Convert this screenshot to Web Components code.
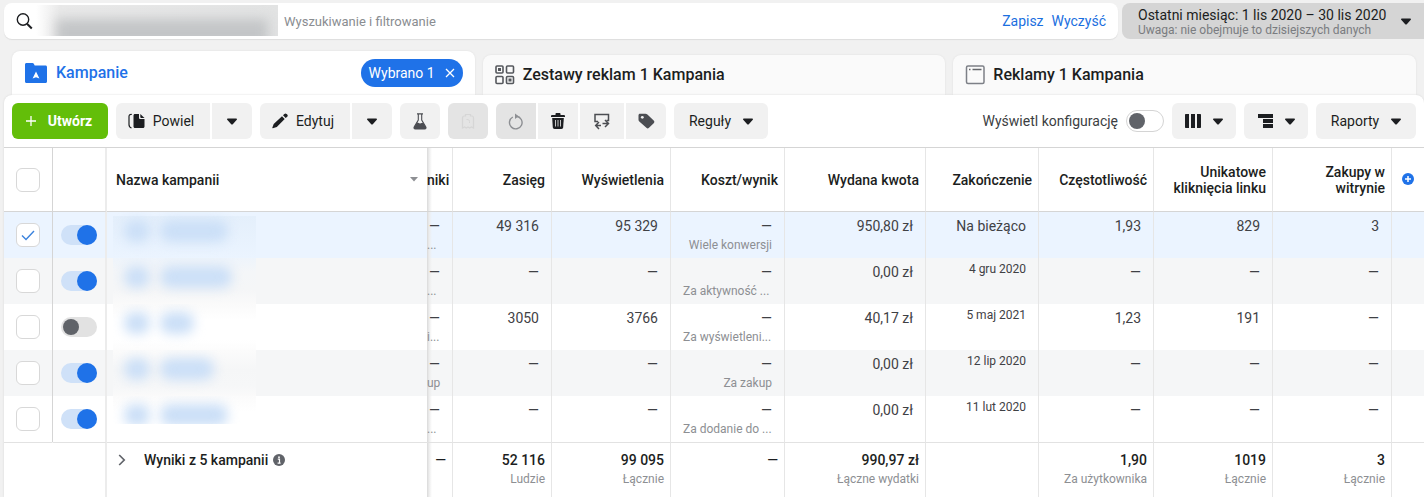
<!DOCTYPE html>
<html lang="pl">
<head>
<meta charset="utf-8">
<meta name="viewport" content="width=device-width, initial-scale=1">
<title>Menedżer reklam – Kampanie</title>
<style>
  body { margin: 0; background: #f1f1f1; color: #1c1e21; font: 14px/18px Roboto, "Liberation Sans", sans-serif; }
</style>
</head>
<body>
<ads-manager></ads-manager>
<script>
const define = (name, cls) => customElements.define(name, cls);

/* Base class: renders the html() of a component into an open shadow root. */
class AdsElement extends HTMLElement {
  connectedCallback() {
    if (this.shadowRoot) return;
    const t = document.createElement('template');
    t.innerHTML = '<style>*{box-sizing:border-box}button,input{font:inherit;color:inherit;margin:0}' + this.css() + '</style>' + this.html();
    this.attachShadow({ mode: 'open' }).append(t.content.cloneNode(true));
  }
  css() { return ''; }
  html() { return '<slot></slot>'; }
}

/* name: [width, height, svg content] */
const ICONS = {
  search: [18, 18, '<circle cx="7" cy="7.500" r="5.700" fill="none" stroke="currentColor" stroke-width="1.400"/><path d="M11 11.700L15.800 16.500" stroke="currentColor" stroke-width="2"/>'],
  caret: [10, 7, '<path d="M.8.5h8.400c.7 0 1 .6.6 1.200L6 5.900c-.6.7-1.400.7-2 0L.2 1.700C-.2 1.100.1.500.8.500z" fill="currentColor"/>'],
  sort: [8, 5, '<path d="M0 0h8L4 4.500z" fill="currentColor"/>'],
  folder: [22, 20, '<path d="M0 1.500C0 .6.6 0 1.500 0h6c.6 0 1 .3 1.300.8L9.700 2.500h10.800c.9 0 1.500.6 1.500 1.500v14.500c0 .9-.6 1.500-1.500 1.500h-19C.6 20 0 19.400 0 18.500z" fill="currentColor"/><path d="M11 8.500l3.400 7L11 14.200 7.600 15.500z" fill="#fff"/>'],
  grid: [20, 20, '<g fill="none" stroke="currentColor" stroke-width="1.600"><rect x="1" y="1" width="7" height="7" rx="1"/><rect x="11.500" y="1" width="7" height="7" rx="1"/><rect x="1" y="11.500" width="7" height="7" rx="1"/><rect x="11.500" y="11.500" width="7" height="7" rx="1"/></g><path d="M3 3h3v3H3zM13.500 13.500h3v3h-3z" fill="currentColor"/>'],
  frame: [20, 20, '<rect x="1.500" y="1" width="17.500" height="17.500" rx="1.500" fill="none" stroke="#7d8087" stroke-width="1.500"/><path d="M4 4.500H5.500M7.500 4.500h9" stroke="#65676b" stroke-width="1.500"/>'],
  close: [10, 10, '<path d="M1 1l8 8M9 1L1 9" stroke="currentColor" stroke-width="1.300"/>'],
  plus: [10, 10, '<path d="M5 0v10M0 5h10" stroke="currentColor" stroke-width="1.300"/>'],
  copy: [17, 16, '<path d="M3.800 1.500C2 1.300 1 1.800 1 3.500v8c0 1.800.8 3 2.500 3.500" fill="none" stroke="currentColor" stroke-width="1.200"/><path d="M7 1h4v3.500c0 1 .5 1.500 1.500 1.500H16.500v7.500c0 .9-.6 1.500-1.500 1.500h-8c-.9 0-1.500-.6-1.500-1.500v-11C5.500 1.600 6.100 1 7 1z" fill="currentColor"/><path d="M12.300 1L16.500 5h-3.300c-.6 0-.9-.3-.9-.9z" fill="currentColor"/>'],
  pencil: [16, 16, '<path d="M10 3.300L12.700 6 4.800 14 .8 15.300c-.3.100-.6-.2-.5-.5L1.700 11z" fill="currentColor"/><path d="M11 2.300l1.400-1.400c.7-.7 1.500-.7 2.200 0l.6.6c.7.7.7 1.500 0 2.200L13.700 5.100z" fill="currentColor"/>'],
  flask: [14, 17, '<path d="M4 .9h6M5.300 1v6L1.300 13.800c-.6 1.100-.2 2.200 1 2.200h9.400c1.200 0 1.600-1.100 1-2.200L8.700 7V1" fill="none" stroke="currentColor" stroke-width="1.100"/><path d="M3.700 9.800c1.200-.8 2.200.7 3.300.7s2.200-.7 3.300-.7l2.700 4.500c.4.900 0 1.700-1 1.700H2c-1 0-1.400-.8-1-1.700z" fill="currentColor"/>'],
  draft: [14, 16, '<path d="M1.500 15V5c0-1.200.6-2 1.800-2H4.500V1.500h5V3h1.200c1.200 0 1.800.8 1.800 2v10l-2-1-1.800 1L7 14l-1.700 1-1.800-1z" fill="none" stroke="currentColor" stroke-width="1.200"/><path d="M5.500 6.500c2 0 3 .6 3 2V10" fill="none" stroke="currentColor"/>'],
  refresh: [16, 17, '<path d="M8.500 3.300A6.300 6.300 0 1 1 4.800 4" fill="none" stroke="currentColor" stroke-width="1.400"/><path d="M7 .5v5.600l3.700-2.800z" fill="currentColor"/>'],
  trash: [14, 16, '<path d="M4.500 2V1c0-.6.4-1 1-1h3c.6 0 1 .4 1 1v1H12.700c.8 0 1.300.5 1.300 1.300v.7H0v-.7C0 2.500.5 2 1.300 2z" fill="currentColor"/><path d="M1.200 5h11.600l-.6 9.300c-.1 1.100-.7 1.700-1.800 1.700H3.600c-1.100 0-1.700-.6-1.800-1.700z" fill="currentColor"/><path d="M4.500 7v6.500M7 7v6.500M9.500 7v6.500" stroke="#f1f1f1" stroke-width=".8"/>'],
  swap: [16, 17, '<path d="M4 8.500H1V1.500h13.500V7.500h-2" fill="none" stroke="currentColor" stroke-width="1.500"/><path d="M2 12.500h5M5 9L1.700 12.500 5 16M8.500 10.500H14M11 7l3.500 3.500L11 14" fill="none" stroke="currentColor" stroke-width="1.500"/>'],
  tag: [17, 16, '<path d="M2 .8h5.500c.8 0 1.300.2 1.900.8l6.300 6c.9.9.9 1.700 0 2.600L11 14.800c-.9.9-1.700.9-2.600 0L1.300 8.500C.8 8 .5 7.500.5 6.700v-4.400C.5 1.400 1.100.8 2 .8z" fill="currentColor"/><circle cx="4.300" cy="4.300" r="1.400" fill="#f1f1f1"/>'],
  columns: [16, 14, '<path d="M0 1c0-.6.4-1 1-1h3v14H1c-.6 0-1-.4-1-1zM6 0h4v14H6zM12 0h3c.6 0 1 .4 1 1v12c0 .6-.4 1-1 1h-3z" fill="currentColor"/>'],
  breakdown: [15, 14, '<path d="M0 0h15v4H0zM5 5h10v4H5zM5 10h10v4H5z" fill="currentColor"/>'],
  addCircle: [12, 12, '<circle cx="6" cy="6" r="6" fill="currentColor"/><path d="M6 3v6M3 6h6" stroke="#fff" stroke-width="1.500"/>'],
  info: [12, 12, '<circle cx="6" cy="6" r="6" fill="currentColor"/><path d="M4.800 5.200h1.700v4M4.600 9.200h3" fill="none" stroke="#fff" stroke-width="1.200"/><circle cx="6" cy="3.200" r=".9" fill="#fff"/>'],
  chevron: [8, 12, '<path d="M1.200 1l5 5-5 5" fill="none" stroke="currentColor" stroke-width="1.700"/>'],
};

define('ads-icon', class extends AdsElement {
  css() { return ':host{display:inline-flex;flex:none}svg{display:block}'; }
  html() {
    const [w, h, body] = ICONS[this.getAttribute('name')];
    return `<svg width="${w}" height="${h}" viewBox="0 0 ${w} ${h}" aria-hidden="true">${body}</svg>`;
  }
});

define('ads-button', class extends AdsElement {
  css() { return `
    :host{display:block;flex:none;width:var(--w,40px)}
    button{display:flex;align-items:center;justify-content:center;gap:8px;width:100%;height:36px;padding:0;border:0;
      border-radius:var(--r,6px);background:#f1f1f1;color:#1c1e21;white-space:nowrap}
    :host([lead]) button{padding-right:4px}
    :host([tone=primary]) button{background:#63be09;color:#fff;font-weight:700;gap:12px;padding-right:2px}
    :host([tone=muted]) button{background:#e4e4e4;color:#8d8f93}
    :host([tone=ghost]) button{background:#e4e4e4;color:#d6d6d6}
    :host([tone=soft]) button{color:#4b4d52}
    :host([wide]) button{gap:12px}`; }
  html() { return `<button type="button" aria-label="${this.getAttribute('label') || ''}"><slot></slot></button>`.replace(' aria-label=""', ''); }
});

define('ads-group', class extends AdsElement {
  css() { return `:host{display:flex;gap:2px}
    ::slotted(*){--r:0}
    ::slotted(:first-child){--r:6px 0 0 6px}
    ::slotted(:last-child){--r:0 6px 6px 0}`; }
});

define('ads-check', class extends AdsElement {
  css() { return `:host{display:block}
    input{appearance:none;display:block;width:24px;height:24px;margin:0 auto;border:1px solid #d8d8d8;border-radius:6px;background:#fff}
    input:checked{background:#fff url("data:image/svg+xml,%3Csvg xmlns='http://www.w3.org/2000/svg' width='14' height='11'%3E%3Cpath d='M1 5.500l4 4 8-8.500' fill='none' stroke='%233b83dd' stroke-width='1.400'/%3E%3C/svg%3E") center no-repeat}`; }
  html() { return `<input type="checkbox" aria-label="${this.getAttribute('label')}"${this.hasAttribute('on') ? ' checked' : ''}>`; }
});

define('ads-toggle', class extends AdsElement {
  css() { return `:host{display:block}
    label{display:flex;align-items:center;gap:8px}
    input{appearance:none;flex:none;display:flex;align-items:center;width:36px;height:20px;padding:0 2px;border-radius:10px;background:#e2e2e2}
    input::before{content:"";width:16px;height:16px;border-radius:50%;background:#606369}
    input:checked{justify-content:flex-end;padding:0;background:#cfe1f8}
    input:checked::before{width:20px;height:20px;background:#1f72e8}
    :host([outlined]) input{width:38px;height:22px;border:1px solid #d4d4d4;border-radius:11px;background:#fff}`; }
  html() {
    const label = this.getAttribute('label');
    return `<label><slot></slot><input type="checkbox"${label ? ` aria-label="${label}"` : ''}${this.hasAttribute('on') ? ' checked' : ''}></label>`;
  }
});

define('ads-search', class extends AdsElement {
  css() { return `:host{display:flex;align-items:center;flex:1;height:36px;padding:0 12px;border-radius:8px;background:#fff;box-shadow:0 1px 1px #ddd}
    .chip{flex:none;align-self:stretch;width:242px;margin:2px 6px 3px 2px;overflow:hidden;background:linear-gradient(90deg,#fff,#e9e9e9 24px,#e2e3e3)}
    .chip i{display:block;width:212px;height:28px;margin:14px 0 0 20px;background:#c3c5c7;filter:blur(6px)}
    input{flex:1;min-width:0;height:32px;padding:0;border:0;outline:0;background:none;font-size:13px}
    input::placeholder{color:#8a8d91;opacity:1}
    button{padding:0;margin-left:8px;border:0;background:none;color:#1b6fe0}`; }
  html() { return `<ads-icon name="search"></ads-icon><div class="chip"><i></i></div>
    <input type="text" aria-label="Wyszukiwanie i filtrowanie" placeholder="Wyszukiwanie i filtrowanie">
    <button type="button">Zapisz</button><button type="button">Wyczyść</button>`; }
});

define('ads-date', class extends AdsElement {
  css() { return `:host{display:block;flex:none;width:302px}
    button{display:flex;align-items:center;justify-content:space-between;width:100%;height:36px;padding:0 13px 0 16px;border:0;border-radius:8px 0 0 8px;background:#d5d5d5;text-align:left}
    small{display:block;font-size:12px;line-height:12px;color:#7a7c80}
    span{white-space:nowrap}`; }
  html() { return '<button type="button"><span><slot></slot><small><slot name="note"></slot></small></span><ads-icon name="caret"></ads-icon></button>'; }
});

define('ads-tab', class extends AdsElement {
  css() { return `:host{display:flex;align-items:center;flex:1 1 0;min-width:0;height:40px;padding:0 12px;border-radius:8px 8px 0 0;background:#fafafa;box-shadow:0 0 2px #ddd}
    :host([active]){height:44px;background:#fff}
    a{display:flex;align-items:center;flex:1;gap:8px;font-size:16px;font-weight:500;color:#1c1e21;text-decoration:none;white-space:nowrap}
    ads-icon{color:#55585d}
    :host([active]) a{padding-left:1px;gap:9px}
    :host([active]) a,:host([active]) ads-icon{color:#1f72e8}`; }
  html() { return `<a href="#"><ads-icon name="${this.getAttribute('icon')}"></ads-icon><slot></slot></a><slot name="end"></slot>`; }
});

define('ads-pill', class extends AdsElement {
  css() { return ':host{display:block;flex:none}button{display:flex;align-items:center;gap:10px;height:28px;padding:0 8px;border:0;border-radius:14px;background:#1f72e8;color:#fff}'; }
  html() { return '<button type="button"><slot></slot><ads-icon name="close"></ads-icon></button>'; }
});

define('ads-toolbar', class extends AdsElement {
  css() { return ':host{display:flex;align-items:center;gap:8px;padding:8px}.space{flex:1}ads-toggle{color:#3c3e42}'; }
  html() { return `
    <ads-button tone="primary" style="--w:96px"><ads-icon name="plus"></ads-icon>Utwórz</ads-button>
    <ads-group><ads-button lead style="--w:94px"><ads-icon name="copy"></ads-icon>Powiel</ads-button><ads-button label="Opcje powielania"><ads-icon name="caret"></ads-icon></ads-button></ads-group>
    <ads-group><ads-button lead style="--w:90px"><ads-icon name="pencil"></ads-icon>Edytuj</ads-button><ads-button label="Opcje edycji"><ads-icon name="caret"></ads-icon></ads-button></ads-group>
    <ads-button tone="soft" label="Test A/B"><ads-icon name="flask"></ads-icon></ads-button>
    <ads-button tone="ghost" label="Wersje robocze"><ads-icon name="draft"></ads-icon></ads-button>
    <ads-group>
      <ads-button tone="muted" label="Cofnij"><ads-icon name="refresh"></ads-icon></ads-button>
      <ads-button label="Usuń"><ads-icon name="trash"></ads-icon></ads-button>
      <ads-button tone="soft" label="Eksport i import" style="--w:44px"><ads-icon name="swap"></ads-icon></ads-button>
      <ads-button tone="soft" label="Tagi"><ads-icon name="tag"></ads-icon></ads-button>
    </ads-group>
    <ads-button wide style="--w:94px">Reguły<ads-icon name="caret"></ads-icon></ads-button>
    <span class="space"></span>
    <ads-toggle outlined>Wyświetl konfigurację</ads-toggle>
    <ads-button wide label="Kolumny" style="--w:64px"><ads-icon name="columns"></ads-icon><ads-icon name="caret"></ads-icon></ads-button>
    <ads-button wide label="Podział" style="--w:64px"><ads-icon name="breakdown"></ads-icon><ads-icon name="caret"></ads-icon></ads-button>
    <ads-button wide style="--w:100px">Raporty<ads-icon name="caret"></ads-icon></ads-button>`; }
});

/* A cell is [value, note]; a note ending in an ellipsis is left aligned. */
const D = '—';
const HEAD = ['niki', 'Zasięg', 'Wyświetlenia', 'Koszt/wynik', 'Wydana kwota', 'Zakończenie', 'Częstotliwość', 'Unikatowe kliknięcia linku', 'Zakupy w witrynie'];
const ROWS = [
  { on: 1, checked: 1, w: 68, cells: [[D, '...'], ['49 316'], ['95 329'], [D, 'Wiele konwersji'], ['950,80 zł'], ['Na bieżąco'], ['1,93'], ['829'], ['3']] },
  { on: 1, w: 72, cells: [[D, '...'], [D], [D], [D, 'Za aktywność ...'], ['0,00 zł'], ['', '4 gru 2020'], [D], [D], [D]] },
  { on: 0, w: 34, cells: [[D, 'i...'], ['3050'], ['3766'], [D, 'Za wyświetleni...'], ['40,17 zł'], ['', '5 maj 2021'], ['1,23'], ['191'], [D]] },
  { on: 1, w: 54, cells: [[D, 'up'], [D], [D], [D, 'Za zakup'], ['0,00 zł'], ['', '12 lip 2020'], [D], [D], [D]] },
  { on: 1, w: 68, cells: [[D, '...'], [D], [D], [D, 'Za dodanie do ...'], ['0,00 zł'], ['', '11 lut 2020'], [D], [D], [D]] },
];
const TOTAL = [[D], ['52 116', 'Ludzie'], ['99 095', 'Łącznie'], [D], ['990,97 zł', 'Łączne wydatki'], [''], ['1,90', 'Za użytkownika'], ['1019', 'Łącznie'], ['3', 'Łącznie']];
const WIDTHS = [49, 54, 0, 26, 99, 119, 114, 141, 113, 115, 119, 119, 32];

define('ads-table', class extends AdsElement {
  css() { return `:host{display:block}
    table{width:100%;border-collapse:separate;border-spacing:0;table-layout:fixed;border-top:1px solid #d5d5d5}
    th,td{padding:0;border-right:1px solid #e6e6e6;text-align:right;vertical-align:top;overflow:hidden;font-weight:400}
    tr>:last-child{border-right:0}
    thead th{height:64px;padding-right:6px;border-bottom:1px solid #d5d5d5;vertical-align:middle;font-weight:500;line-height:16px}
    tbody td,tbody th{height:46px;padding:5px 12px 0 0;color:#3f4145}
    tbody tr:nth-child(even){background:#f5f6f7}
    tbody tr.sel{background:#ebf4ff}
    tfoot td,tfoot th{height:55px;padding:8px 6px 0 0;border-top:1px solid #e2e2e2;font-weight:500}
    thead .pick,tbody .pick{padding:0;vertical-align:middle;border-right-color:#d5d5d5}
    tfoot .pick{border-right-color:transparent}
    .run,tbody .run{padding:0 0 0 8px;vertical-align:middle;border-right:2px solid #ececec}
    .name,tbody .name{padding:0;border-right:0;text-align:left}
    .name>div{display:flex;align-items:center;justify-content:space-between;padding:0 9px}
    .name ads-icon{color:#8d8f93}
    .res{background:linear-gradient(90deg,#d9d9d9,#ececec 2px,transparent 5px)}
    td>span{display:block;white-space:nowrap}
    small{display:block;margin-top:2px;font-size:12px;font-weight:400;line-height:16px;color:#8d8f93;white-space:nowrap}
    small.cut{padding-left:12px;text-align:left}
    .res>small.cut{padding-left:0}
    small.date{margin-top:-2px;color:#3f4145}
    .plus{text-align:center;color:#1f72e8}
    thead .plus{padding:0}
    tfoot .name{padding:8px 0 0}
    tfoot .name>div{justify-content:flex-start;padding:0 11px;gap:5px}
    tfoot .name ads-icon{color:#606369}
    .open{display:flex;padding:0;margin-right:13px;border:0;background:none}
    .name .veil{display:flex;justify-content:flex-start;align-items:flex-start;gap:10px;width:143px;height:46px;margin-left:6px;padding:8px 0 0 11px;overflow:hidden}
    .veil i{width:26px;height:22px;border-radius:10px;background:#cbdff7;filter:blur(6px)}
    .veil i+i{width:var(--n)}
    tr:nth-child(1) .veil{background:linear-gradient(#ebf4ff 4px,#e4effb 4px,#ebf4ff)}
    tr:nth-child(2) .veil{background:linear-gradient(#eef4fb,#f4f6f8 14px,#f5f6f7 32px,#fafafa)}
    tr:nth-child(3) .veil{background:linear-gradient(#fafafa,#fff 16px,#fff 36px,#fcfcfc)}
    tr:nth-child(4) .veil{background:linear-gradient(#fbfbfb,#f5f6f7 20px,#f6f7f8 36px,#fafafa)}
    tr:nth-child(5) .veil{height:28px;margin-bottom:18px;background:linear-gradient(#fbfbfb,#fff 16px)}`; }
  html() {
    const cell = ([value, note], i) => {
      const cut = note && note.endsWith('...');
      const sub = note ? `<small class="${value === '' ? 'date' : cut ? 'cut' : ''}">${note}</small>` : '';
      return `<td${i === 0 ? ' class="res"' : ''}>${value ? `<span>${value}</span>` : ''}${sub}</td>`;
    };
    return `<table>
      <colgroup>${WIDTHS.map(w => `<col${w ? ` style="width:${w}px"` : ''}>`).join('')}</colgroup>
      <thead><tr>
        <th class="pick"><ads-check label="Zaznacz wszystkie"></ads-check></th><th class="run"></th>
        <th class="name" scope="col"><div>Nazwa kampanii<ads-icon name="sort"></ads-icon></div></th>
        ${HEAD.map((h, i) => `<th scope="col"${i ? '' : ' class="res"'}><span>${h}</span></th>`).join('')}
        <th class="plus"><ads-icon name="addCircle"></ads-icon></th>
      </tr></thead>
      <tbody>${ROWS.map((r, n) => `<tr${r.checked ? ' class="sel"' : ''}>
        <td class="pick"><ads-check label="Zaznacz kampanię ${n + 1}"${r.checked ? ' on' : ''}></ads-check></td>
        <td class="run"><ads-toggle label="Włącz kampanię ${n + 1}"${r.on ? ' on' : ''}></ads-toggle></td>
        <td class="name"><div class="veil" style="--n:${r.w}px"><i></i><i></i></div></td>
        ${r.cells.map(cell).join('')}<td></td></tr>`).join('')}</tbody>
      <tfoot><tr><td class="pick"></td><td class="run"></td>
        <th class="name" scope="row"><div><button class="open" type="button" aria-label="Rozwiń"><ads-icon name="chevron"></ads-icon></button>Wyniki z 5 kampanii<ads-icon name="info"></ads-icon></div></th>
        ${TOTAL.map(cell).join('')}<td></td></tr></tfoot>
    </table>`;
  }
});

define('ads-manager', class extends AdsElement {
  css() { return `:host{display:block;padding:3px 0 0 4px}
    header{display:flex;gap:4px}
    nav{display:flex;align-items:flex-end;gap:8px;padding:12px 8px 0}
    main{position:relative;background:#fff;border-radius:8px 8px 0 0;box-shadow:0 0 2px #d5d5d5}`; }
  html() { return `
    <header><ads-search></ads-search>
      <ads-date>Ostatni miesiąc: 1 lis 2020 – 30 lis 2020<span slot="note">Uwaga: nie obejmuje to dzisiejszych danych</span></ads-date></header>
    <nav>
      <ads-tab icon="folder" active>Kampanie<ads-pill slot="end">Wybrano 1</ads-pill></ads-tab>
      <ads-tab icon="grid">Zestawy reklam 1 Kampania</ads-tab>
      <ads-tab icon="frame">Reklamy 1 Kampania</ads-tab>
    </nav>
    <main><ads-toolbar></ads-toolbar><ads-table></ads-table></main>`; }
});
</script>
</body>
</html>
